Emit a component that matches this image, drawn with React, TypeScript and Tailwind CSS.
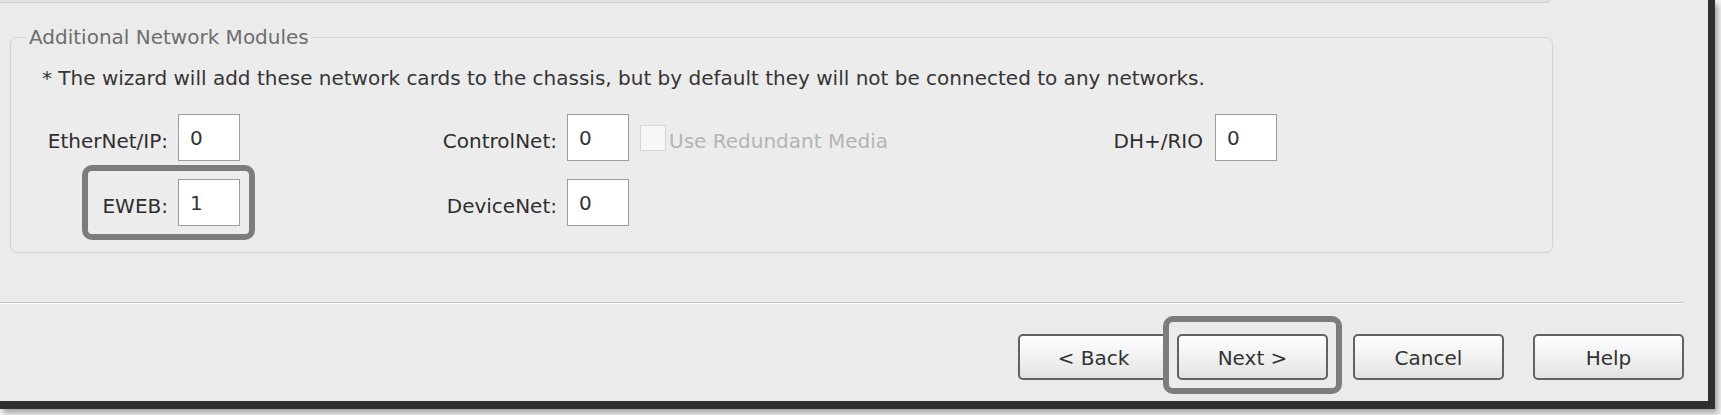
import React from "react";

const font = { fontFamily: '"DejaVu Sans", Verdana, sans-serif' };

function Field({ value, className = "" }: { value: string; className?: string }) {
  return (
    <div
      className={`h-[47px] w-[62px] shrink-0 border border-[#9c9c9c] bg-white pl-[11px] pt-[11px] text-[20px] leading-[24px] text-[#333] ${className}`}
    >
      {value}
    </div>
  );
}

function Btn({ label, className = "" }: { label: string; className?: string }) {
  return (
    <div
      className={`flex h-[46px] w-[151px] shrink-0 items-center justify-center rounded-[5px] border-2 border-[#626262] bg-gradient-to-b from-white to-[#e3e3e3] pt-[2px] text-[20px] leading-[24px] text-[#333] ${className}`}
    >
      {label}
    </div>
  );
}

export default function App() {
  return (
    <div className="relative h-[415px] w-[1721px] overflow-hidden bg-[#f6f6f6]" style={font}>
      <div className="relative h-[409px] w-[1715px] border-b-[8px] border-r-[7px] border-[#2f2f2f] bg-[#ebebeb] shadow-[3px_4px_6px_rgba(0,0,0,0.35)]">
        {/* bottom edge of the panel above */}
        <div className="h-[3px] w-[1550px] rounded-br-[4px] border-b border-r border-[#d2d2d2] bg-[#e2e2e2]" />

        {/* group box */}
        <div className="relative ml-[10px] mt-[34px] h-[216px] w-[1543px] rounded-[7px] border border-[#d3d3d3] bg-[#ececec]">
          <div className="absolute left-[15px] top-[-13px] bg-[#ebebeb] px-[3px] text-[20px] leading-[24px] text-[#6e6e6e]">
            Additional Network Modules
          </div>

          <div className="pl-[31px] pt-[28px] text-[20px] leading-[24px] text-[#353535]">
            * The wizard will add these network cards to the chassis, but by default they will not be connected to any networks.
          </div>

          {/* row 1 */}
          <div className="mt-[24px] flex items-start text-[20px] leading-[24px] text-[#2e2e2e]">
            <div className="mt-[15px] w-[157px] shrink-0 text-right">EtherNet/IP:</div>
            <Field value="0" className="ml-[10px]" />
            <div className="mt-[15px] w-[317px] shrink-0 text-right">ControlNet:</div>
            <Field value="0" className="ml-[10px]" />
            <div className="flex w-[574px] shrink-0 items-start">
              <div className="ml-[11px] mt-[11px] h-[26px] w-[26px] shrink-0 border border-[#d6d6d6] bg-[#f7f7f7]" />
              <div className="ml-[3px] mt-[15px] text-[#b4b4b4]">Use Redundant Media</div>
              <div className="ml-auto mt-[15px]">DH+/RIO</div>
            </div>
            <Field value="0" className="ml-[12px]" />
          </div>

          {/* row 2 */}
          <div className="mt-[18px] flex items-start text-[20px] leading-[24px] text-[#2e2e2e]">
            <div className="mt-[15px] w-[157px] shrink-0 text-right">EWEB:</div>
            <Field value="1" className="ml-[10px]" />
            <div className="mt-[15px] w-[317px] shrink-0 text-right">DeviceNet:</div>
            <Field value="0" className="ml-[10px]" />
          </div>
        </div>

        {/* separator */}
        <div className="mt-[49px] h-[2px] w-[1683px] border-b border-t border-b-white border-t-[#c3c3c3]" />

        {/* buttons */}
        <div className="mt-[30px] flex">
          <Btn label="< Back" className="ml-[1018px] w-[150px]" />
          <Btn label="Next >" className="ml-[8px]" />
          <Btn label="Cancel" className="ml-[25px]" />
          <Btn label="Help" className="ml-[29px]" />
        </div>

        {/* annotation highlights */}
        <div className="absolute left-[82px] top-[165px] h-[75px] w-[173px] rounded-[10px] border-[6px] border-[#7c7c7c]" />
        <div className="absolute left-[1163px] top-[316px] h-[78px] w-[179px] rounded-[10px] border-[6px] border-[#7c7c7c]" />
      </div>
    </div>
  );
}
